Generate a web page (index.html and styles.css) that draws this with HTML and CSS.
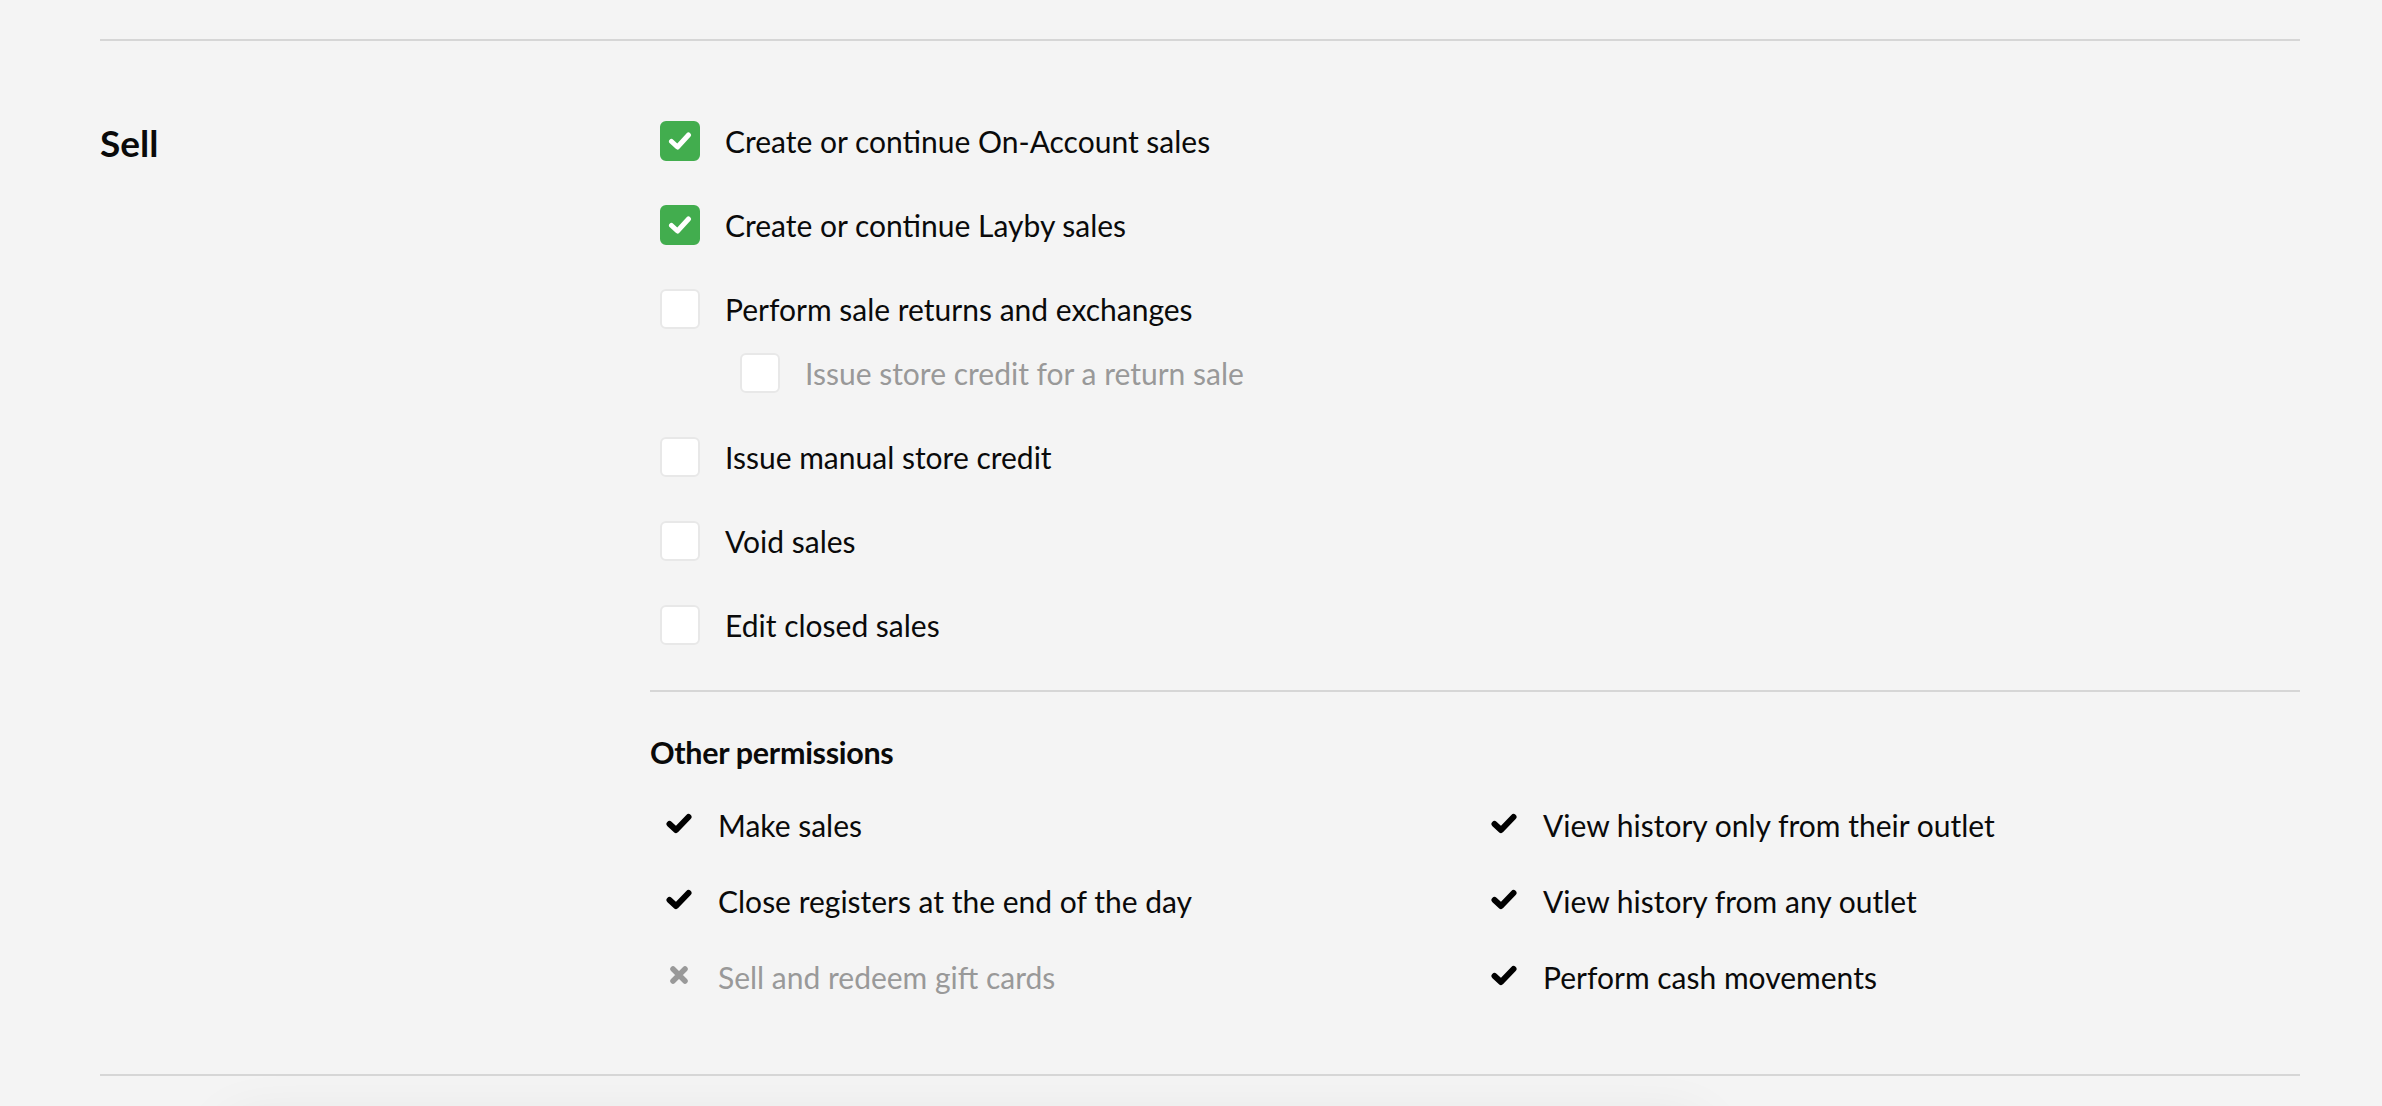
FILE: index.html
```html
<!DOCTYPE html>
<html>
<head>
<meta charset="utf-8">
<link rel="stylesheet" href="styles.css">
</head>
<body>
<div class="page">
  <hr class="rule rule-top">
  <section class="section">
    <h2 class="section-title">Sell</h2>
    <div class="section-body">
      <ul class="checks">
        <li class="check-item">
          <div class="check-row">
            <span class="box box-on"><svg viewBox="0 0 24 20" width="24" height="20"><polyline points="3.5,10.5 9.5,16 20.5,4" fill="none" stroke="#fff" stroke-width="5" stroke-linecap="round" stroke-linejoin="round"/></svg></span>
            <span class="label">Create or continue On-Account sales</span>
          </div>
        </li>
        <li class="check-item">
          <div class="check-row">
            <span class="box box-on"><svg viewBox="0 0 24 20" width="24" height="20"><polyline points="3.5,10.5 9.5,16 20.5,4" fill="none" stroke="#fff" stroke-width="5" stroke-linecap="round" stroke-linejoin="round"/></svg></span>
            <span class="label">Create or continue Layby sales</span>
          </div>
        </li>
        <li class="check-item">
          <div class="check-row">
            <span class="box"></span>
            <span class="label">Perform sale returns and exchanges</span>
          </div>
          <div class="check-row sub-row">
            <span class="box"></span>
            <span class="label label-muted">Issue store credit for a return sale</span>
          </div>
        </li>
        <li class="check-item">
          <div class="check-row">
            <span class="box"></span>
            <span class="label">Issue manual store credit</span>
          </div>
        </li>
        <li class="check-item">
          <div class="check-row">
            <span class="box"></span>
            <span class="label">Void sales</span>
          </div>
        </li>
        <li class="check-item">
          <div class="check-row">
            <span class="box"></span>
            <span class="label">Edit closed sales</span>
          </div>
        </li>
      </ul>
      <hr class="rule rule-inner">
      <h3 class="sub-title">Other permissions</h3>
      <div class="perm-grid">
        <ul class="perms">
          <li class="perm"><span class="icon"><svg viewBox="0 0 26 21" width="26" height="21"><polyline points="3.5,11 10,17 22.5,4" fill="none" stroke="#000" stroke-width="6" stroke-linecap="round" stroke-linejoin="round"/></svg></span><span class="perm-text">Make sales</span></li>
          <li class="perm"><span class="icon"><svg viewBox="0 0 26 21" width="26" height="21"><polyline points="3.5,11 10,17 22.5,4" fill="none" stroke="#000" stroke-width="6" stroke-linecap="round" stroke-linejoin="round"/></svg></span><span class="perm-text">Close registers at the end of the day</span></li>
          <li class="perm perm-off"><span class="icon"><svg viewBox="0 0 20 20" width="20" height="20"><path d="M4 4 L16 16 M16 4 L4 16" stroke="#999" stroke-width="5.5" stroke-linecap="round"/></svg></span><span class="perm-text">Sell and redeem gift cards</span></li>
        </ul>
        <ul class="perms">
          <li class="perm"><span class="icon"><svg viewBox="0 0 26 21" width="26" height="21"><polyline points="3.5,11 10,17 22.5,4" fill="none" stroke="#000" stroke-width="6" stroke-linecap="round" stroke-linejoin="round"/></svg></span><span class="perm-text">View history only from their outlet</span></li>
          <li class="perm"><span class="icon"><svg viewBox="0 0 26 21" width="26" height="21"><polyline points="3.5,11 10,17 22.5,4" fill="none" stroke="#000" stroke-width="6" stroke-linecap="round" stroke-linejoin="round"/></svg></span><span class="perm-text">View history from any outlet</span></li>
          <li class="perm"><span class="icon"><svg viewBox="0 0 26 21" width="26" height="21"><polyline points="3.5,11 10,17 22.5,4" fill="none" stroke="#000" stroke-width="6" stroke-linecap="round" stroke-linejoin="round"/></svg></span><span class="perm-text">Perform cash movements</span></li>
        </ul>
      </div>
    </div>
  </section>
  <hr class="rule rule-bottom">
</div>
<div class="floating-bar"></div>
</body>
</html>
```

FILE: styles.css
```css
html, body {
  margin: 0;
  padding: 0;
  background: #f4f4f4;
  overflow: hidden;
}
body {
  font-family: Lato, "Liberation Sans", sans-serif;
  color: #0a0a0a;
  height: 1106px;
}
.page {
  width: 2200px;
  margin-left: 100px;
  padding-top: 39px;
}
.rule {
  border: 0;
  height: 2px;
  background: #d6d6d6;
  margin: 0;
}
.section {
  display: grid;
  grid-template-columns: 550px 1650px;
  padding-top: 80px;
}
.section-title {
  margin: 0;
  font-size: 37px;
  font-weight: 700;
  line-height: 44px;
  padding-top: 0;
  color: #0a0a0a;
}
.section-body {
  display: flex;
  flex-direction: column;
}
.checks {
  list-style: none;
  margin: 0;
  padding: 0 0 0 10px;
}
.check-item {
  margin-bottom: 44px;
}
.check-item:last-child {
  margin-bottom: 45px;
}
.check-row {
  display: flex;
  align-items: center;
  height: 40px;
}
.sub-row {
  margin-top: 24px;
  padding-left: 80px;
}
.box {
  width: 40px;
  height: 40px;
  box-sizing: border-box;
  border-radius: 6px;
  background: #fff;
  border: 2px solid #e8e8e8;
  display: flex;
  align-items: center;
  justify-content: center;
  flex: none;
}
.box-on {
  background: #42ad4e;
  border-color: #42ad4e;
}
.label {
  margin-left: 25px;
  font-size: 30px;
  line-height: 40px;
  color: #0a0a0a;
}
.label-muted {
  color: #999;
}
.sub-title {
  margin: 0;
  padding-top: 42px;
  font-size: 30.5px;
  font-weight: 700;
  line-height: 36px;
  letter-spacing: -0.3px;
}
.perm-grid {
  display: grid;
  grid-template-columns: 1fr 1fr;
  padding-top: 35px;
}
.perms {
  list-style: none;
  margin: 0;
  padding: 0;
}
.perm {
  display: flex;
  align-items: center;
  height: 40px;
  margin-bottom: 36px;
  font-size: 30px;
}
.icon {
  width: 26px;
  margin-left: 16px;
  margin-right: 26px;
  display: flex;
  justify-content: center;
  flex: none;
  position: relative;
  top: -2px;
}
.perm-off {
  color: #999;
}
.rule-bottom {
  margin-top: 41px;
}
.floating-bar {
  position: fixed;
  left: 230px;
  width: 1470px;
  top: 1125px;
  height: 100px;
  background: #fff;
  box-shadow: 0 0 60px rgba(0, 0, 0, 0.09);
}
```
